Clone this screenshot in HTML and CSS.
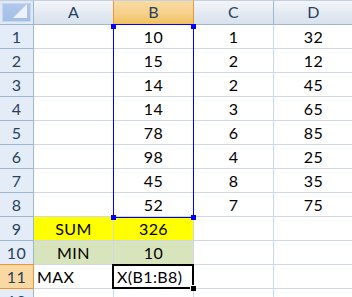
FILE: index.html
```html
<!DOCTYPE html>
<html lang="en">
<head>
    <meta charset="UTF-8">
    <title>Sheet1</title>
    <link rel="stylesheet" href="styles.css">
</head>
<body>
    <div class="sheet">
        <div class="grid">
            <div class="corner"><span class="corner-tri"></span></div>
            <div class="col-head">A</div>
            <div class="col-head active">B</div>
            <div class="col-head">C</div>
            <div class="col-head">D</div>

            <div class="row-head">1</div><div class="cell"></div><div class="cell">10</div><div class="cell">1</div><div class="cell">32</div>
            <div class="row-head">2</div><div class="cell"></div><div class="cell">15</div><div class="cell">2</div><div class="cell">12</div>
            <div class="row-head">3</div><div class="cell"></div><div class="cell">14</div><div class="cell">2</div><div class="cell">45</div>
            <div class="row-head">4</div><div class="cell"></div><div class="cell">14</div><div class="cell">3</div><div class="cell">65</div>
            <div class="row-head">5</div><div class="cell"></div><div class="cell">78</div><div class="cell">6</div><div class="cell">85</div>
            <div class="row-head">6</div><div class="cell"></div><div class="cell">98</div><div class="cell">4</div><div class="cell">25</div>
            <div class="row-head">7</div><div class="cell"></div><div class="cell">45</div><div class="cell">8</div><div class="cell">35</div>
            <div class="row-head">8</div><div class="cell"></div><div class="cell">52</div><div class="cell">7</div><div class="cell">75</div>
            <div class="row-head">9</div><div class="cell yellow">SUM</div><div class="cell yellow">326</div><div class="cell"></div><div class="cell"></div>
            <div class="row-head">10</div><div class="cell green">MIN</div><div class="cell green">10</div><div class="cell"></div><div class="cell"></div>
            <div class="row-head active">11</div><div class="cell left">MAX</div><div class="cell left">X(B1:B8)</div><div class="cell"></div><div class="cell"></div>
            <div class="row-head">12</div><div class="cell"></div><div class="cell"></div><div class="cell"></div><div class="cell"></div>
        </div>

        <!-- selection B1:B8 -->
        <div class="range">
            <span class="knob tl"></span><span class="knob tr"></span>
            <span class="knob bl"></span><span class="knob br"></span>
        </div>
        <!-- active cell B11 -->
        <div class="active-cell"><span class="fill-handle"></span></div>
    </div>
</body>
</html>
```

FILE: styles.css
```css
:root {
    --grid: #d0d7e5;
    --head-line: #9eb6ce;
    --head-text: #27415f;
    --sel: #0000ff;
}
body {
    margin: 0;
    background: #fff;
    font-family: Lato, 'Liberation Sans', Arial, sans-serif;
    font-size: 16px;
    letter-spacing: 0.4px;
    color: #000;
    overflow: hidden;
}
.sheet {
    position: relative;
    width: 352px;
    height: 297px;
    overflow: hidden;
}
.grid {
    display: grid;
    grid-template-columns: 34px 80px 80px 80px 80px;
    grid-template-rows: 25px repeat(12, 24px);
}
.grid > div {
    box-sizing: border-box;
    border-right: 1px solid var(--grid);
    border-bottom: 1px solid var(--grid);
    display: flex;
    align-items: flex-end;
    justify-content: center;
    line-height: 18px;
    padding: 0 3px 2px;
    white-space: nowrap;
}
.grid > .corner {
    background: #dfe8f5;
    border-top: 1px solid #c5d0de;
    border-right: 1px solid var(--head-line);
    border-bottom: 1px solid var(--head-line);
    padding: 2px;
    align-items: stretch;
}
.corner-tri {
    flex: 1;
    background: linear-gradient(#afc8eb, #a3bfe6);
    border: 1px solid #c8d8f0;
    position: relative;
}
.corner-tri::after {
    content: '';
    position: absolute;
    right: 3px;
    bottom: 3px;
    border-style: solid;
    border-width: 0 0 14px 14px;
    border-color: transparent transparent #eef2f8 transparent;
}
.grid > .col-head {
    background: linear-gradient(#f3f6fa, #e3e9f2 55%, #d8e1ed);
    border-top: 1px solid #c5d0de;
    border-right: 1px solid var(--head-line);
    border-bottom: 1px solid var(--head-line);
    color: var(--head-text);
    padding-bottom: 3px;
}
.grid > .col-head.active {
    background: linear-gradient(#f9dba4, #f6d08a 55%, #f1c15f);
    border-right-color: #f29436;
    border-bottom-color: #f29436;
    border-left: 1px solid #f29436;
    margin-left: -1px;
}
.grid > .row-head {
    background: #e4ecf7;
    border-right: 1px solid var(--head-line);
    border-bottom: 1px solid var(--head-line);
    color: var(--head-text);
}
.grid > .row-head.active {
    background: #f9d8a2;
    border-right-color: #f29436;
    border-bottom-color: #f29436;
    border-top: 1px solid #f29436;
    margin-top: -1px;
}
.grid > .yellow { background: #ffff00; }
.grid > .green { background: #d8e4bc; }
.grid > .left { justify-content: flex-start; }

.range {
    position: absolute;
    left: 113px;
    top: 24px;
    width: 79px;
    height: 192px;
    border: 1px solid var(--sel);
}
.knob {
    position: absolute;
    width: 5px;
    height: 5px;
    background: var(--sel);
}
.knob.tl { left: -3px; top: -1px; }
.knob.tr { right: -3px; top: -1px; }
.knob.bl { left: -3px; bottom: -3px; }
.knob.br { right: -3px; bottom: -3px; }

.active-cell {
    position: absolute;
    left: 112px;
    top: 264px;
    width: 78px;
    height: 21px;
    border: 2px solid #000;
}
.fill-handle {
    position: absolute;
    right: -4px;
    bottom: -4px;
    width: 5px;
    height: 5px;
    background: #000;
    border-left: 1px solid #fff;
    border-top: 1px solid #fff;
}
```
